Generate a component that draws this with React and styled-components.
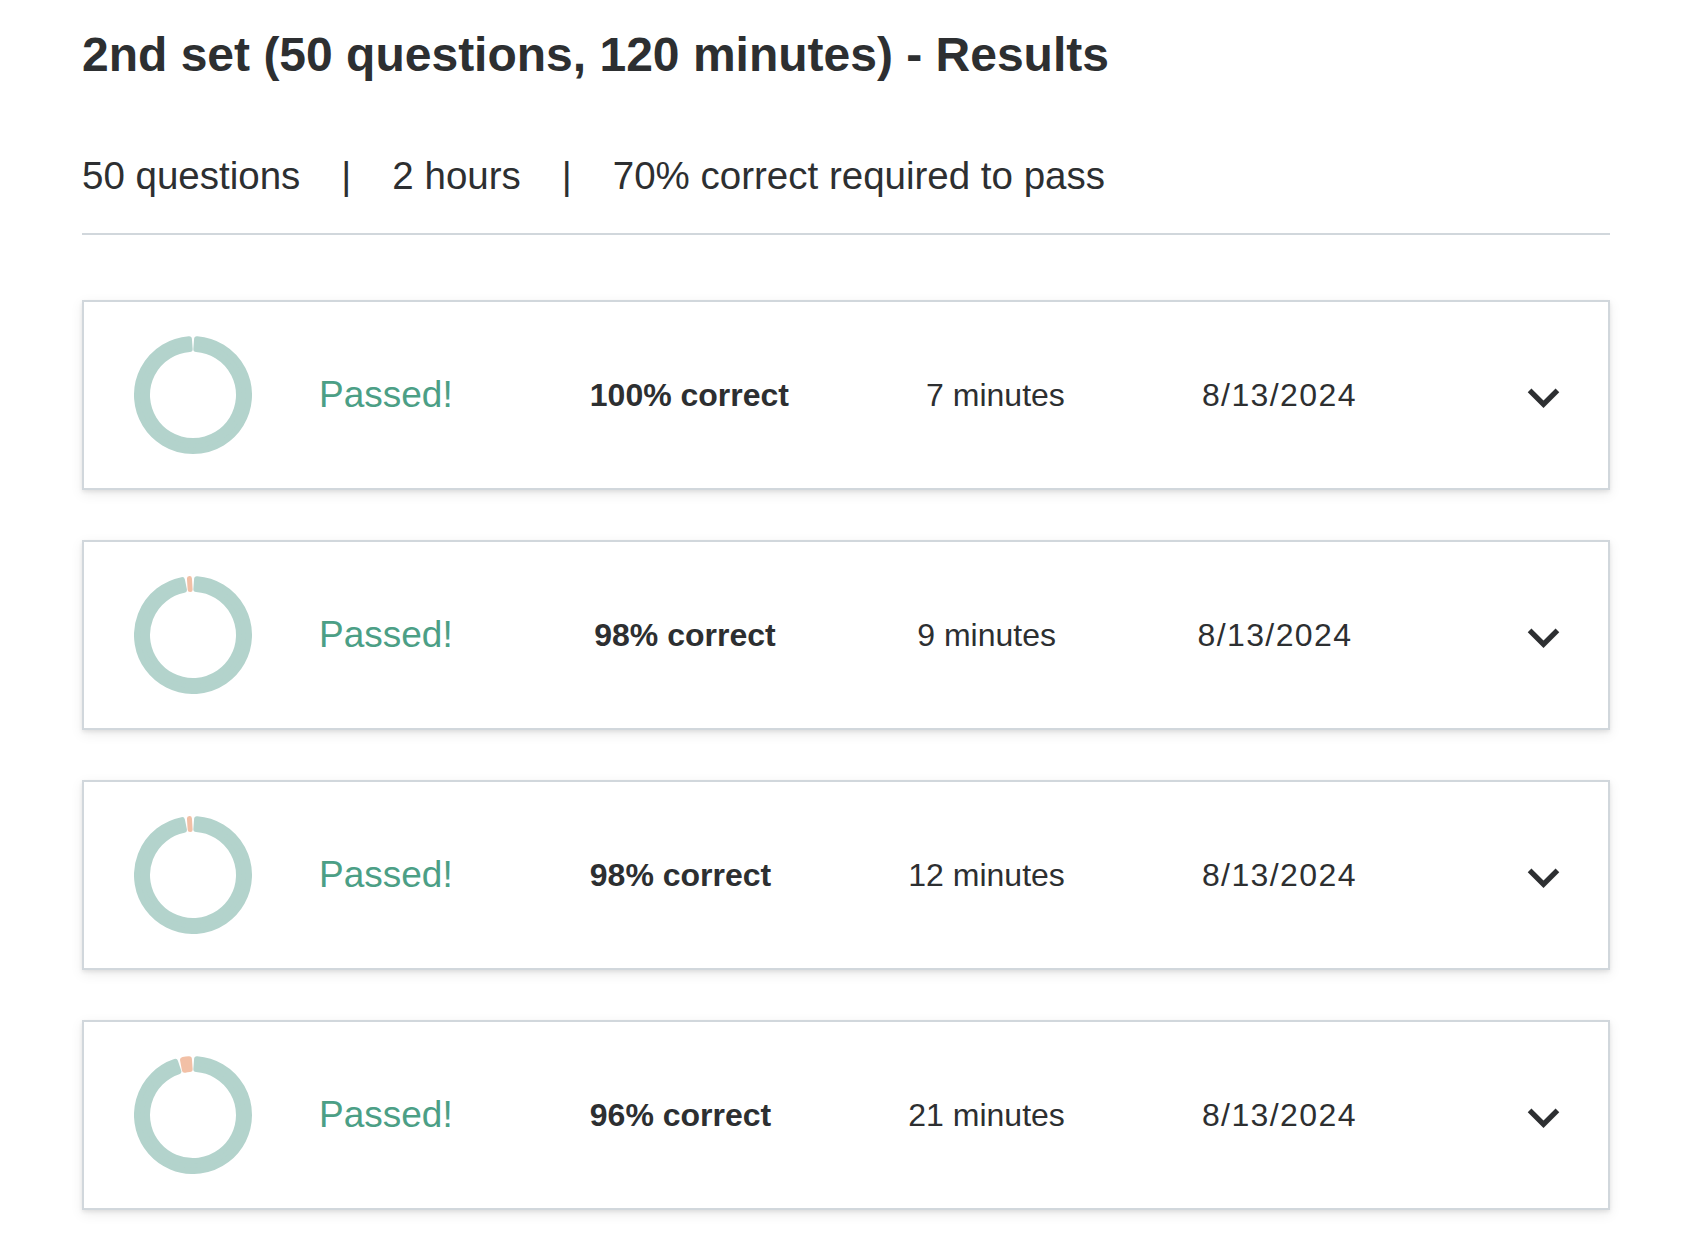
import React from "react";
import styled, { createGlobalStyle } from "styled-components";

const GlobalStyle = createGlobalStyle`
  html, body { margin: 0; padding: 0; background: #ffffff; }
  body { font-family: "Liberation Sans", Arial, Helvetica, sans-serif; color: #2d2f31; }
  * { box-sizing: border-box; }
`;

const Page = styled.main`
  padding: 26px 92px 40px 82px;
  width: 1702px;
`;

const Title = styled.h1`
  margin: 0;
  font-size: 48px;
  line-height: 1.2;
  font-weight: 700;
  color: #2d2f31;
`;

const Meta = styled.div`
  margin-top: 69px;
  padding-bottom: 34px;
  border-bottom: 2px solid #d1d7dc;
  font-size: 38.5px;
  line-height: 1.2;
  color: #2d2f31;
  display: flex;
  align-items: center;
`;

const Sep = styled.span`
  margin: 0 41px;
`;

const List = styled.div`
  margin-top: 65px;
  display: flex;
  flex-direction: column;
  gap: 50px;
`;

const Card = styled.section`
  height: 190px;
  border: 2px solid #d1d7dc;
  background: #ffffff;
  box-shadow: 0 2px 4px rgba(0, 0, 0, 0.08), 0 4px 12px rgba(0, 0, 0, 0.08);
  display: flex;
  align-items: center;
  justify-content: space-between;
  padding: 0 14px 0 50px;
`;

const Lead = styled.div`
  display: flex;
  align-items: center;
  gap: 67px;
`;

const Status = styled.span`
  font-size: 37px;
  line-height: 1;
  color: #4c9f86;
`;

const Cell = styled.span`
  font-size: 32px;
  line-height: 1;
  font-weight: ${(p) => (p.$bold ? 700 : 400)};
  letter-spacing: ${(p) => (p.$spaced ? "1.4px" : "normal")};
  color: #2d2f31;
  white-space: nowrap;
`;

const Toggle = styled.button`
  width: 100px;
  height: 80px;
  margin-top: 5px;
  padding: 0;
  border: none;
  background: none;
  display: flex;
  align-items: center;
  justify-content: center;
  cursor: pointer;
  color: #2d2f31;
`;

const TEAL = "#b3d3cc";
const SALMON = "#f2c0a6";

function pt(cx, cy, r, a) {
  const rad = (a * Math.PI) / 180;
  return [cx + r * Math.sin(rad), cy - r * Math.cos(rad)];
}

function sectorPath(cx, cy, r1, r2, a0, a1) {
  const large = a1 - a0 > 180 ? 1 : 0;
  const [ox0, oy0] = pt(cx, cy, r2, a0);
  const [ox1, oy1] = pt(cx, cy, r2, a1);
  const [ix1, iy1] = pt(cx, cy, r1, a1);
  const [ix0, iy0] = pt(cx, cy, r1, a0);
  if (a1 - a0 < 0.001) {
    return `M${ox0} ${oy0} L${ix0} ${iy0} Z`;
  }
  return `M${ox0} ${oy0} A${r2} ${r2} 0 ${large} 1 ${ox1} ${oy1} L${ix1} ${iy1} A${r1} ${r1} 0 ${large} 0 ${ix0} ${iy0} Z`;
}

function RoundedSector({ cx, cy, r1, r2, a0, a1, color, corner }) {
  const rmid = (r1 + r2) / 2;
  const widthPx = ((a1 - a0) * Math.PI * rmid) / 180;
  const c = Math.max(0.5, Math.min(corner, widthPx / 2, (r2 - r1) / 2));
  const da = (c / rmid) * (180 / Math.PI);
  let b0 = a0 + da;
  let b1 = a1 - da;
  if (b1 < b0) {
    const m = (a0 + a1) / 2;
    b0 = m;
    b1 = m;
  }
  const d = sectorPath(cx, cy, r1 + c, r2 - c, b0, b1);
  return (
    <path d={d} fill={color} stroke={color} strokeWidth={2 * c} strokeLinejoin="round" />
  );
}

function Donut({ pct }) {
  const size = 118;
  const cx = 59;
  const cy = 59;
  const r2 = 59;
  const r1 = 43;
  const pad = 1.6;
  const split = (360 * pct) / 100;
  return (
    <svg width={size} height={size} viewBox={`0 0 ${size} ${size}`} aria-hidden="true">
      <RoundedSector cx={cx} cy={cy} r1={r1} r2={r2} a0={pad / 2} a1={split - pad / 2} color={TEAL} corner={3} />
      {pct < 100 && (
        <RoundedSector cx={cx} cy={cy} r1={r1} r2={r2} a0={split + pad / 2} a1={360 - pad / 2} color={SALMON} corner={3} />
      )}
    </svg>
  );
}

function Chevron() {
  return (
    <svg width="63" height="63" viewBox="0 0 24 24" aria-hidden="true">
      <path d="M16.59 8.59L12 13.17 7.41 8.59 6 10l6 6 6-6z" fill="currentColor" />
    </svg>
  );
}

const attempts = [
  { pct: 100, time: "7 minutes", date: "8/13/2024" },
  { pct: 98, time: "9 minutes", date: "8/13/2024" },
  { pct: 98, time: "12 minutes", date: "8/13/2024" },
  { pct: 96, time: "21 minutes", date: "8/13/2024" },
];

export default function App() {
  return (
    <>
      <GlobalStyle />
      <Page>
        <Title>2nd set (50 questions, 120 minutes) - Results</Title>
        <Meta>
          <span>50 questions</span>
          <Sep>|</Sep>
          <span>2 hours</span>
          <Sep>|</Sep>
          <span>70% correct required to pass</span>
        </Meta>
        <List>
          {attempts.map((a, i) => (
            <Card key={i}>
              <Lead>
                <Donut pct={a.pct} />
                <Status>Passed!</Status>
              </Lead>
              <Cell $bold>{a.pct}% correct</Cell>
              <Cell>{a.time}</Cell>
              <Cell $spaced>{a.date}</Cell>
              <Toggle aria-label="Expand attempt">
                <Chevron />
              </Toggle>
            </Card>
          ))}
        </List>
      </Page>
    </>
  );
}
